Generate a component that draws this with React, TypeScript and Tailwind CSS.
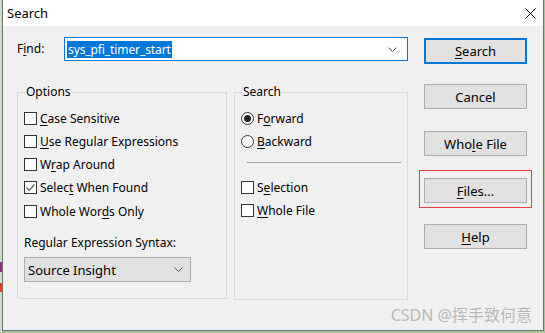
import React, { type ReactNode } from 'react';

function Mn({ children }: { children: ReactNode }) {
  return <span className="underline decoration-1 underline-offset-[2px]">{children}</span>;
}

function Chevron() {
  return (
    <svg width="9" height="5" viewBox="0 0 9 5" className="shrink-0">
      <path d="M0.5 0.5 L4.5 4.5 L8.5 0.5" fill="none" stroke="#555" strokeWidth="1" />
    </svg>
  );
}

function CheckBox({ checked = false }: { checked?: boolean }) {
  return (
    <span className="flex h-[13px] w-[13px] shrink-0 items-center justify-center border border-[#333] bg-white">
      {checked && (
        <svg width="11" height="11" viewBox="0 0 11 11">
          <path d="M1.5 5.5 L4.2 8.3 L9.5 2.5" fill="none" stroke="#5c5c5c" strokeWidth="1.2" />
        </svg>
      )}
    </span>
  );
}

function Radio({ checked = false }: { checked?: boolean }) {
  return (
    <span className="flex h-[13px] w-[13px] shrink-0 items-center justify-center rounded-full border border-[#333] bg-white">
      {checked && <span className="h-[7px] w-[7px] rounded-full bg-[#222]" />}
    </span>
  );
}

function Row({ box, children }: { box: ReactNode; children: ReactNode }) {
  return (
    <div className="flex h-[23px] items-center gap-[3px]">
      {box}
      <span>{children}</span>
    </div>
  );
}

function Button({ children, primary = false }: { children: ReactNode; primary?: boolean }) {
  return (
    <div
      className={
        primary
          ? 'flex h-[26px] w-[103px] items-center justify-center border-2 border-[#0078d7] bg-[#e1e1e1]'
          : 'flex h-[25px] w-[103px] items-center justify-center border border-[#adadad] bg-[#e1e1e1]'
      }
    >
      {children}
    </div>
  );
}

export default function App() {
  return (
    <div className="flex h-[333px] w-[545px] items-start overflow-hidden bg-[#a6c39e] font-['Noto_Sans',sans-serif] text-[12px] leading-[16px] text-black">
      {/* bits of the page behind the dialog */}
      <div className="flex h-full w-[2px] flex-col bg-[#cfdccb]">
        <div className="h-[262px]" />
        <div className="h-[10px] bg-[#8a2b8a]" />
        <div className="h-[11px]" />
        <div className="h-[9px] bg-[#e23a2a]" />
      </div>

      <div className="relative flex h-[331px] w-[542px] flex-col border-x border-b border-[#6a756a] bg-[#f0f0f0]">
        {/* title bar */}
        <div className="flex h-[26px] items-center justify-between bg-white pl-[4px] pr-[7px]">
          <span className="text-[13px]">Search</span>
          <svg width="11" height="11" viewBox="0 0 11 11">
            <path d="M0.5 0.5 L10.5 10.5 M10.5 0.5 L0.5 10.5" stroke="#000" strokeWidth="1" />
          </svg>
        </div>

        <div className="flex">
          {/* left side */}
          <div className="flex w-[405px] flex-col pl-[14px] pt-[11px]">
            <div className="flex items-center">
              <span className="w-[47px]">
                F<Mn>i</Mn>nd:
              </span>
              <div className="flex h-[24px] w-[344px] items-center justify-between border border-[#0078d7] bg-white pl-[2px] pr-[10px]">
                <span className="bg-[#0078d7] px-[1px] text-[12px] leading-[17px] tracking-[-0.1px] text-white">sys_pfi_timer_start</span>
                <Chevron />
              </div>
            </div>

            <div className="mt-[23px] flex gap-[7px]">
              <fieldset className="h-[215px] w-[210px] border border-[#d8d8d8] pl-[6px]">
                <legend className="ml-[1px] px-[1px]">Options</legend>
                <div className="flex flex-col pt-[7px]">
                  <Row box={<CheckBox />}>
                    <Mn>C</Mn>ase Sensitive
                  </Row>
                  <Row box={<CheckBox />}>
                    <Mn>U</Mn>se Regular Expressions
                  </Row>
                  <Row box={<CheckBox />}>
                    W<Mn>r</Mn>ap Around
                  </Row>
                  <Row box={<CheckBox checked />}>
                    Selec<Mn>t</Mn> When Found
                  </Row>
                  <div className="pt-px">
                    <Row box={<CheckBox />}>
                      Whole Wor<Mn>d</Mn>s Only
                    </Row>
                  </div>
                  <div className="mt-[12px]">Regular Expression Syntax:</div>
                  <div className="mt-[6px] flex h-[25px] w-[167px] items-center justify-between border border-[#adadad] bg-[#e1e1e1] pl-[3px] pr-[7px] text-[13px]">
                    <span>Source Insight</span>
                    <Chevron />
                  </div>
                </div>
              </fieldset>

              <fieldset className="h-[216px] w-[174px] border border-[#d8d8d8] pl-[6px] pr-[6px]">
                <legend className="ml-[1px] px-[1px]">Search</legend>
                <div className="flex flex-col pt-[7px]">
                  <Row box={<Radio checked />}>
                    F<Mn>o</Mn>rward
                  </Row>
                  <Row box={<Radio />}>
                    <Mn>B</Mn>ackward
                  </Row>
                  <div className="ml-[6px] mt-[9px] h-px bg-[#a0a0a0]" />
                  <div className="mt-[13px]">
                    <Row box={<CheckBox />}>
                      S<Mn>e</Mn>lection
                    </Row>
                    <Row box={<CheckBox />}>
                      <Mn>W</Mn>hole File
                    </Row>
                  </div>
                </div>
              </fieldset>
            </div>
          </div>

          {/* buttons */}
          <div className="flex flex-col pt-[12px] text-[13px]">
            <div className="ml-[16px]">
              <Button primary>
                <Mn>S</Mn>earch
              </Button>
            </div>
            <div className="ml-[16px] mt-[20px]">
              <Button>Cancel</Button>
            </div>
            <div className="ml-[16px] mt-[22px]">
              <Button>
                Who<Mn>l</Mn>e File
              </Button>
            </div>
            <div className="ml-[11px] mt-[14px] w-[113px] border border-[#e8413c] pb-[4px] pl-[4px] pt-[7px]">
              <Button>
                <Mn>F</Mn>iles...
              </Button>
            </div>
            <div className="ml-[16px] mt-[16px]">
              <Button>
                <Mn>H</Mn>elp
              </Button>
            </div>
          </div>
        </div>

        <span className="pointer-events-none absolute bottom-[6px] right-[11px] font-['Noto_Sans','Noto_Sans_CJK_SC',sans-serif] text-[16px] leading-[18px] text-[#b8b8b8]">
          CSDN @挥手致何意
        </span>
      </div>
    </div>
  );
}
